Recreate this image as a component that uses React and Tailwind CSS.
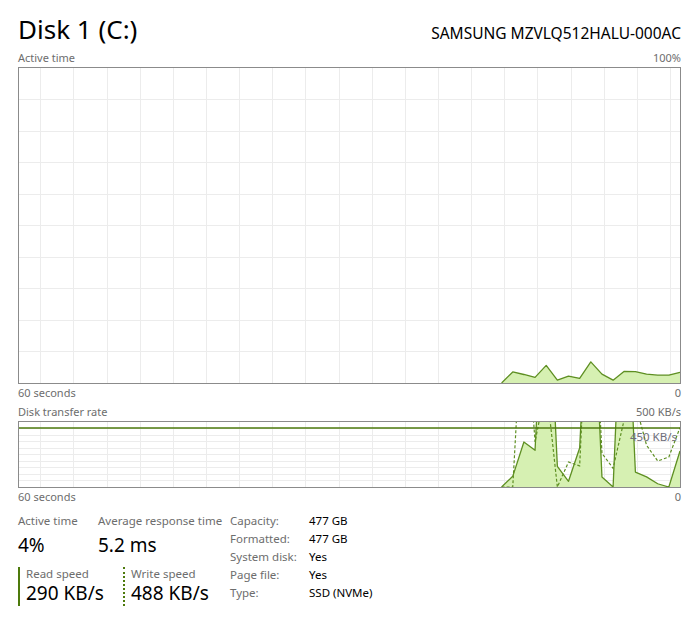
const STEP = 11.15;

// last 17 samples of the 60 second window, oldest first
const activeTime = [0, 3.5, 2.7, 1.8, 5.6, 0.9, 2.2, 1.5, 6.7, 2.8, 0.9, 3.7, 3.6, 2.8, 2.5, 2.5, 3.4];
const readRate = [0, 82, 346, 282, 2000, 159, 44, 300, 2000, 77, 0, 2000, 115, 78, 25, 0, 277];
const writeRate = [0, 0, 1560, 346, 785, 0, 192, 162, 2000, 259, 144, 520, 640, 321, 200, 231, 457];

function toPoints(values, w, h, max) {
  return values.map((v, i) => {
    const x = w - (values.length - 1 - i) * STEP;
    const y = h - (v / max) * h;
    return [x, y];
  });
}

function Grid({ w, h, rows }) {
  const cols = [];
  for (let x = 21.7; x < w; x += 33.15) cols.push(x);
  const lines = [];
  for (let i = 1; i < rows; i++) lines.push((h / rows) * i);
  return (
    <g stroke="#ececec" strokeWidth="1" shapeRendering="crispEdges">
      {cols.map((x) => (
        <line key={"c" + x} x1={x} y1="0" x2={x} y2={h} />
      ))}
      {lines.map((y) => (
        <line key={"r" + y} x1="0" y1={y} x2={w} y2={y} />
      ))}
    </g>
  );
}

function Area({ pts, h }) {
  const line = pts.map((p) => p.join(",")).join(" ");
  const first = pts[0];
  const last = pts[pts.length - 1];
  return (
    <>
      <polygon points={`${first[0]},${h} ${line} ${last[0]},${h}`} fill="#d6f0b2" />
      <polyline points={line} fill="none" stroke="#5e8f22" strokeWidth="1.3" strokeLinejoin="round" />
    </>
  );
}

function ActiveChart() {
  const w = 661;
  const h = 315;
  return (
    <div className="h-[317px] border border-[#8b8b8b] bg-white">
      <svg width={w} height={h} className="block">
        <Grid w={w} h={h} rows={10} />
        <Area pts={toPoints(activeTime, w, h, 100)} h={h} />
      </svg>
    </div>
  );
}

function TransferChart() {
  const w = 661;
  const h = 65;
  const writeLine = toPoints(writeRate, w, h, 500)
    .map((p) => p.join(","))
    .join(" ");
  return (
    <div className="relative h-[67px] border border-[#8b8b8b] bg-white">
      <svg width={w} height={h} className="block">
        <Grid w={w} h={h} rows={10} />
        <Area pts={toPoints(readRate, w, h, 500)} h={h} />
        <polyline points={writeLine} fill="none" stroke="#5e8f22" strokeWidth="1.2" strokeDasharray="3 2" />
        <line x1="0" y1={h * 0.1 - 0.5} x2={w} y2={h * 0.1 - 0.5} stroke="#4d7a0c" strokeWidth="1.3" />
      </svg>
      <span className="absolute right-[3px] top-[7px] text-[11.5px] leading-[16px] text-[#6d6d7a]">450 KB/s</span>
    </div>
  );
}

function Caption({ left, right, className = "" }) {
  return (
    <div className={"flex h-[18px] items-center justify-between text-[11px] text-[#6d6d6d] " + className}>
      <span>{left}</span>
      <span>{right}</span>
    </div>
  );
}

function Stat({ label, value, className }) {
  return (
    <div className={className}>
      <div className="whitespace-nowrap text-[11.5px] leading-[18px] text-[#6d6d6d]">{label}</div>
      <div className="whitespace-nowrap text-[19px] leading-[30px] text-black">{value}</div>
    </div>
  );
}

const props = [
  ["Capacity:", "477 GB"],
  ["Formatted:", "477 GB"],
  ["System disk:", "Yes"],
  ["Page file:", "Yes"],
  ["Type:", "SSD (NVMe)"],
];

export default function App() {
  return (
    <div
      className="h-[619px] w-[696px] overflow-hidden bg-white pl-[18px] pr-[15px] pt-[10px]"
      style={{ fontFamily: '"Noto Sans", "Open Sans", sans-serif' }}
    >
      <div className="flex h-[39px] items-baseline justify-between">
        <h1 className="text-[26px] leading-[38px] text-black">Disk 1 (C:)</h1>
        <span className="text-[15.5px] text-black">SAMSUNG MZVLQ512HALU-000AC</span>
      </div>

      <Caption left="Active time" right="100%" />
      <ActiveChart />
      <Caption left="60 seconds" right="0" />

      <Caption className="mt-[1px]" left="Disk transfer rate" right="500 KB/s" />
      <TransferChart />
      <Caption left="60 seconds" right="0" />

      <div className="mt-[6px] flex">
        <div className="w-[212px]">
          <div className="flex">
            <Stat className="w-[80px]" label="Active time" value="4%" />
            <Stat label="Average response time" value="5.2 ms" />
          </div>
          <div className="mt-[7px] flex">
            <div className="h-[39px] w-[105px] border-l-2 border-[#4d7a0c] pl-[6px]">
              <div className="text-[11.5px] leading-[14px] text-[#6d6d6d]">Read speed</div>
              <div className="whitespace-nowrap text-[19px] leading-[25px] text-black">290 KB/s</div>
            </div>
            <div className="h-[39px] border-l-2 border-dotted border-[#4d7a0c] pl-[6px]">
              <div className="text-[11.5px] leading-[14px] text-[#6d6d6d]">Write speed</div>
              <div className="whitespace-nowrap text-[19px] leading-[25px] text-black">488 KB/s</div>
            </div>
          </div>
        </div>
        <div className="flex flex-col">
          {props.map(([k, v]) => (
            <div key={k} className="flex h-[18px] items-center text-[11.5px]">
              <span className="w-[79px] text-[#6d6d6d]">{k}</span>
              <span className="text-black">{v}</span>
            </div>
          ))}
        </div>
      </div>
    </div>
  );
}
